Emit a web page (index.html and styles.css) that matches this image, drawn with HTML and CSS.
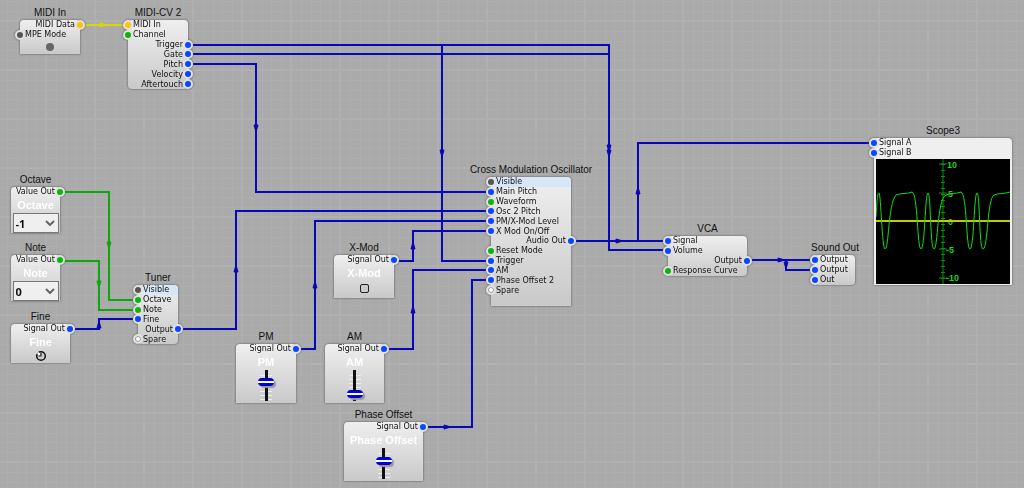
FILE: index.html
```html
<!DOCTYPE html>
<html lang="en">
<head>
  <meta charset="UTF-8" />
  <meta name="viewport" content="width=device-width, initial-scale=1.0"/>
  <title>Cross Modulation Patch</title>
  <link rel="stylesheet" href="styles.css">
</head>
<body>
  <main class="canvas">

    <svg class="wires" viewBox="0 0 1024 488" aria-hidden="true">
      <g class="wire-midi">
        <path d="M80 25H128" />
        <path class="arrow" d="M100 23L107 25L100 27Z" />
      </g>

      <g class="wire-value">
        <path d="M61 192H109V300H138" />
        <path class="arrow" d="M107 242H111L109 249Z" />
        <path d="M61 261H99V310H138" />
        <path class="arrow" d="M97 281H101L99 288Z" />
      </g>

      <g class="wire-signal">
        <path d="M188 45H609V250H668" />
        <path d="M188 54H609" />
        <path d="M442 45V261H491" />
        <path d="M188 64H256V192H491" />
        <path d="M70 329H99V319H138" />
        <path d="M178 329H236V211H491" />
        <path d="M296 349H315V221H491" />
        <path d="M394 261H413V231H491" />
        <path d="M384 349H413V270H491" />
        <path d="M423 427H472V280H491" />
        <path d="M570 241H668" />
        <path d="M638 241V143H874" />
        <path d="M748 260H815" />
        <path d="M786 260V270H815" />
        <path class="arrow" d="M254 125H258L256 132Z" />
        <path class="arrow" d="M440 150H444L442 157Z" />
        <path class="arrow" d="M607 145H611L609 152Z" />
        <path class="arrow" d="M607 150H611L609 157Z" />
        <path class="arrow" d="M97 328L99 321L101 328Z" />
        <path class="arrow" d="M234 272L236 265L238 272Z" />
        <path class="arrow" d="M313 288L315 281L317 288Z" />
        <path class="arrow" d="M411 249L413 242L415 249Z" />
        <path class="arrow" d="M411 313L413 306L415 313Z" />
        <path class="arrow" d="M444 425L451 427L444 429Z" />
        <path class="arrow" d="M616 239L623 241L616 243Z" />
        <path class="arrow" d="M636 194L638 187L640 194Z" />
        <path class="arrow" d="M778 258L785 260L778 262Z" />
        <path class="arrow" d="M784 262H788L786 269Z" />
      </g>
    </svg>

    <section class="node midi-in">
      <h2>MIDI In</h2>
      <div class="body">
        <ul class="ports rows-2">
          <li class="out midi">MIDI Data</li>
          <li class="in gui">MPE Mode</li>
        </ul>
        <span class="led"></span>
      </div>
    </section>

    <section class="node midi-cv">
      <h2>MIDI-CV 2</h2>
      <div class="body rounded">
        <ul class="ports rows-7">
          <li class="in midi">MIDI In</li>
          <li class="in value">Channel</li>
          <li class="out">Trigger</li>
          <li class="out">Gate</li>
          <li class="out">Pitch</li>
          <li class="out">Velocity</li>
          <li class="out">Aftertouch</li>
        </ul>
      </div>
    </section>

    <section class="node octave">
      <h2>Octave</h2>
      <div class="body">
        <ul class="ports">
          <li class="out value">Value Out</li>
        </ul>
        <label for="octave">Octave</label>
        <div class="picker">
          <select id="octave">
            <option>-2</option>
            <option selected>-1</option>
            <option>0</option>
            <option>1</option>
          </select>
          <svg viewBox="0 0 10 6"><path d="M1 1L5 5L9 1" /></svg>
        </div>
      </div>
    </section>

    <section class="node note">
      <h2>Note</h2>
      <div class="body">
        <ul class="ports">
          <li class="out value">Value Out</li>
        </ul>
        <label for="note">Note</label>
        <div class="picker">
          <select id="note">
            <option>0</option>
            <option>1</option>
            <option>2</option>
          </select>
          <svg viewBox="0 0 10 6"><path d="M1 1L5 5L9 1" /></svg>
        </div>
      </div>
    </section>

    <section class="node fine">
      <h2>Fine</h2>
      <div class="body">
        <ul class="ports">
          <li class="out">Signal Out</li>
        </ul>
        <label for="fine">Fine</label>
        <div class="knob">
          <svg viewBox="0 0 12 12">
            <circle cx="6" cy="6" r="4.300" fill="#ccc" stroke="#111" stroke-width="1.500" />
            <path d="M6 6L2.500 2.500" stroke="#fff" stroke-width="2" />
            <path d="M6 3V6H3.500" stroke="#111" stroke-width="1.200" fill="none" />
          </svg>
          <input id="fine" type="range" min="-5" max="5" value="0">
        </div>
      </div>
    </section>

    <section class="node tuner">
      <h2>Tuner</h2>
      <div class="body rounded">
        <ul class="ports rows-6">
          <li class="in gui shaded">Visible</li>
          <li class="in value">Octave</li>
          <li class="in value">Note</li>
          <li class="in">Fine</li>
          <li class="out">Output</li>
          <li class="in spare">Spare</li>
        </ul>
      </div>
    </section>

    <section class="node pm">
      <h2>PM</h2>
      <div class="body">
        <ul class="ports">
          <li class="out">Signal Out</li>
        </ul>
        <label for="pm">PM</label>
        <div class="fader"><input id="pm" type="range" min="0" max="100" value="66"></div>
      </div>
    </section>

    <section class="node am">
      <h2>AM</h2>
      <div class="body">
        <ul class="ports">
          <li class="out">Signal Out</li>
        </ul>
        <label for="am">AM</label>
        <div class="fader"><input id="am" type="range" min="0" max="100" value="14"></div>
      </div>
    </section>

    <section class="node phase">
      <h2>Phase Offset</h2>
      <div class="body">
        <ul class="ports">
          <li class="out">Signal Out</li>
        </ul>
        <label for="phase">Phase Offset</label>
        <div class="fader"><input id="phase" type="range" min="0" max="100" value="62"></div>
      </div>
    </section>

    <section class="node x-mod">
      <h2>X-Mod</h2>
      <div class="body">
        <ul class="ports">
          <li class="out">Signal Out</li>
        </ul>
        <label for="xmod">X-Mod</label>
        <input id="xmod" type="checkbox">
      </div>
    </section>

    <section class="node oscillator">
      <h2>Cross Modulation Oscillator</h2>
      <div class="body">
        <ul class="ports rows-12">
          <li class="in gui shaded">Visible</li>
          <li class="in">Main Pitch</li>
          <li class="in value">Waveform</li>
          <li class="in">Osc 2 Pitch</li>
          <li class="in">PM/X-Mod Level</li>
          <li class="in">X Mod On/Off</li>
          <li class="out">Audio Out</li>
          <li class="in value">Reset Mode</li>
          <li class="in">Trigger</li>
          <li class="in">AM</li>
          <li class="in">Phase Offset 2</li>
          <li class="in spare">Spare</li>
        </ul>
      </div>
    </section>

    <section class="node vca">
      <h2>VCA</h2>
      <div class="body rounded">
        <ul class="ports rows-4">
          <li class="in">Signal</li>
          <li class="in">Volume</li>
          <li class="out">Output</li>
          <li class="in value">Response Curve</li>
        </ul>
      </div>
    </section>

    <section class="node sound-out">
      <h2>Sound Out</h2>
      <div class="body rounded">
        <ul class="ports rows-3">
          <li class="in">Output</li>
          <li class="in">Output</li>
          <li class="in">Out</li>
        </ul>
      </div>
    </section>

    <section class="node scope">
      <h2>Scope3</h2>
      <div class="body">
        <ul class="ports rows-2">
          <li class="in">Signal A</li>
          <li class="in">Signal B</li>
        </ul>
        <svg class="screen" viewBox="0 0 134 125">
          <path class="axis" d="M67 0V125M63 5H71M63 34H71M63 62H71M63 90H71M63 119H71" />
          <path class="ticks" d="M67 5V120" />
          <text x="71" y="9">10</text>
          <text x="72" y="38">5</text>
          <text x="72" y="66">0</text>
          <text x="70" y="94">-5</text>
          <text x="70" y="122">-10</text>
          <path class="zero" d="M0 62H134" />
          <path class="trace" d="M0 58C1 46 1 34 3 34C5 36 6 90 9 90C13 90 12 45 20 36C24 34 32 35 36 33C42 34 41 90 45 90C49 90 49 34 52 34C55 34 54 90 58 90C62 90 61 40 70 36C74 34 80 35 85 33C91 34 90 90 94 90C98 90 98 34 101 34C104 34 103 90 107 90C112 90 111 40 118 36C122 34 129 35 134 33" />
        </svg>
      </div>
    </section>

  </main>
</body>
</html>
```
FILE: styles.css
```css
*,
*::before {
  margin: 0;
  padding: 0;
  box-sizing: border-box;
}

body {
  font-family: "DejaVu Sans", Verdana, sans-serif;
  font-size: 8px;
  line-height: 10px;
  color: #111;
}

.canvas {
  position: relative;
  min-height: 100vh;
  overflow: hidden;
  background-color: #aaa;
  background-image:
    linear-gradient(#b0b0b0 2px, transparent 2px 11px, #aeaeae 11px 12px, transparent 12px 21px, #aeaeae 21px 22px, transparent 22px 30px, #aeaeae 30px 31px, transparent 31px 40px, #aeaeae 40px 41px, transparent 41px),
    linear-gradient(90deg, #b0b0b0 2px, transparent 2px 11px, #aeaeae 11px 12px, transparent 12px 21px, #aeaeae 21px 22px, transparent 22px 30px, #aeaeae 30px 31px, transparent 31px 40px, #aeaeae 40px 41px, transparent 41px);
  background-size: 49px 49px;
  background-position: 45px 20px;
}

/* wires */
.wires {
  position: absolute;
  top: 0;
  left: 0;
  width: 1024px;
  height: 488px;
  fill: none;
  stroke-width: 2;
}

.wire-midi {
  stroke: #d8d800;
}

.wire-value {
  stroke: #0ca80c;
}

.wire-signal {
  stroke: #0808b8;
}

.wire-midi .arrow {
  fill: #d8d800;
}

.wire-value .arrow {
  fill: #0ca80c;
}

.wire-signal .arrow {
  fill: #0808b8;
}

.arrow {
  stroke-width: 1;
}

/* nodes */
.node {
  position: absolute;
  display: flex;
  flex-direction: column;
  align-items: center;
}

.node h2 {
  padding-top: 2px;
  font: 10px/14px "Liberation Sans", Arial, sans-serif;
  white-space: nowrap;
}

.body {
  width: 100%;
  display: flex;
  flex-direction: column;
  align-items: center;
  border-radius: 4px 4px 0 0;
  background: linear-gradient(#efefef, #c9c9c9);
  filter: drop-shadow(0 0 1px #555);
}

.body.rounded {
  border-radius: 4px;
}

.body label {
  font: bold 11px/16px "Liberation Sans", Arial, sans-serif;
  color: #fff;
  white-space: nowrap;
}

/* ports */
.ports {
  width: 100%;
  list-style: none;
  display: grid;
  grid-auto-rows: 1fr;
}

.ports li {
  min-height: 0;
  display: flex;
  align-items: center;
  white-space: nowrap;
}

.ports li::before {
  content: "";
  width: 10px;
  height: 10px;
  margin-top: -1px;
  margin-bottom: -1px;
  flex: none;
  border: 2px solid #e2e2e2;
  border-radius: 50%;
  background: #0a46ff;
}

.ports .in::before {
  margin-left: -5px;
}

.ports .out {
  flex-direction: row-reverse;
}

.ports .out::before {
  margin-right: -5px;
}

.ports .midi::before {
  background: #ffc400;
}

.ports .value::before {
  background: #0cb40c;
}

.ports .gui::before {
  background: #555;
}

.ports .spare::before {
  background: #fff;
  box-shadow: inset 0 0 0 1px #999;
}

.ports .shaded {
  background: #d7e7f8;
  border-radius: 4px 4px 0 0;
}

/* rows sit a little tighter than their line height */
.rows-7,
.rows-6,
.rows-12 {
  line-height: 9px;
}

.rows-7 {
  height: 69px;
}

.rows-6 {
  height: 59px;
}

.rows-12 {
  height: 118px;
}

/* controls */
.led {
  width: 8px;
  height: 8px;
  margin-top: 3px;
  flex: none;
  border-radius: 50%;
  background: #666;
}

.picker {
  width: 46px;
  display: grid;
  align-items: center;
}

.picker select,
.picker svg {
  grid-area: 1 / 1;
}

.picker select {
  width: 100%;
  height: 20px;
  padding-left: 2px;
  border: 1px solid #777;
  border-radius: 0;
  appearance: none;
  background: #efefef;
  font: bold 11px "Open Sans", sans-serif;
  color: #111;
}

.picker svg {
  width: 10px;
  height: 6px;
  margin-right: 4px;
  justify-self: end;
  fill: none;
  stroke: #666;
  stroke-width: 2;
  pointer-events: none;
}

.knob {
  display: grid;
}

.knob svg,
.knob input {
  grid-area: 1 / 1;
  width: 12px;
  height: 12px;
}

.knob input {
  opacity: 0;
}

.fader {
  background: repeating-linear-gradient(transparent 0 3px, #eee 3px 4px) center / 12px 28px no-repeat;
}

.fader input {
  display: block;
  width: 20px;
  height: 31px;
  appearance: none;
  writing-mode: vertical-lr;
  direction: rtl;
  background: linear-gradient(#111, #111) center / 3px 100% no-repeat;
}

.fader input::-webkit-slider-thumb {
  appearance: none;
  width: 16px;
  height: 8px;
  border-radius: 4px;
  background: linear-gradient(#0000a0 1px, #0000f0 1px 3px, #fff 3px 5px, #0000f0 5px 7px, #0000a0 7px);
  box-shadow: 2px 2px 1px #999;
}

.body input[type="checkbox"] {
  width: 9px;
  height: 9px;
  margin-top: 3px;
  appearance: none;
  border: 1px solid #222;
  border-radius: 2px;
  background: #ccc;
}

/* placement on the canvas */
.midi-in {
  left: 20px;
  top: 4px;
  width: 60px;
}

.midi-in .body {
  height: 34px;
}

.midi-cv {
  left: 128px;
  top: 4px;
  width: 60px;
}

.octave {
  left: 11px;
  top: 171px;
  width: 49px;
}

.note {
  left: 11px;
  top: 239px;
  width: 49px;
}

.octave .body,
.note .body {
  height: 46px;
}

.fine {
  left: 11px;
  top: 308px;
  width: 59px;
}

.fine .body {
  height: 39px;
}

.tuner {
  left: 138px;
  top: 269px;
  width: 40px;
}

.pm {
  left: 236px;
  top: 328px;
  width: 60px;
}

.am {
  left: 325px;
  top: 328px;
  width: 59px;
}

.phase {
  left: 344px;
  top: 406px;
  width: 79px;
}

.pm .body,
.am .body,
.phase .body {
  height: 59px;
}

.x-mod {
  left: 334px;
  top: 239px;
  width: 60px;
}

.x-mod .body {
  height: 43px;
}

.oscillator {
  left: 491px;
  top: 161px;
  width: 80px;
}

.oscillator .body {
  height: 129px;
}

.vca {
  left: 668px;
  top: 220px;
  width: 79px;
}

.sound-out {
  left: 815px;
  top: 239px;
  width: 40px;
}

.scope {
  left: 874px;
  top: 122px;
  width: 138px;
}

.scope .body {
  height: 147px;
  background: #efefef;
}

.screen {
  width: 134px;
  height: 125px;
  margin-top: 1px;
  background: #000;
  fill: none;
}

.screen .axis,
.screen .ticks {
  stroke: #0a960a;
}

.screen .ticks {
  stroke-width: 4;
  stroke-dasharray: 1 5;
}

.screen .zero {
  stroke: #c8c800;
  stroke-width: 2;
}

.screen .trace {
  stroke: #0fe00f;
}

.screen text {
  font: bold 9px "Liberation Sans", Arial, sans-serif;
  fill: #0fe00f;
}
```
